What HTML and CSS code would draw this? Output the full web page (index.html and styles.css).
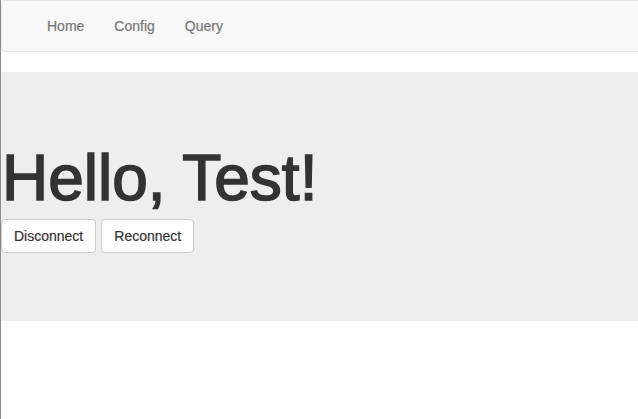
FILE: index.html
```html
<!DOCTYPE html>
<html lang="en">
<head>
<meta charset="utf-8">
<title>Hello, Test!</title>
<link rel="stylesheet" href="styles.css">
</head>
<body>
<div class="page">
  <nav class="navbar">
    <ul class="nav">
      <li><a href="#">Home</a></li>
      <li><a href="#">Config</a></li>
      <li><a href="#">Query</a></li>
    </ul>
  </nav>
  <section class="jumbotron">
    <h1 class="title">Hello, Test!</h1>
    <div class="actions">
      <button class="btn" type="button">Disconnect</button>
      <button class="btn" type="button">Reconnect</button>
    </div>
  </section>
</div>
</body>
</html>
```
FILE: styles.css
```css
html, body {
  margin: 0;
  padding: 0;
  background: #fff;
  overflow: hidden;
}
body {
  font-family: "Liberation Sans", Arial, Helvetica, sans-serif;
  font-size: 14px;
  line-height: 20px;
  color: #333;
}
.page {
  border-left: 1px solid #8c8c8c;
  min-height: 419px;
  box-sizing: border-box;
}
.navbar {
  height: 52px;
  box-sizing: border-box;
  background: #f8f8f8;
  border: 1px solid #e7e7e7;
  border-radius: 4px;
  margin-right: -8px;
  margin-bottom: 20px;
  padding-left: 30px;
}
.nav {
  list-style: none;
  margin: 0;
  padding: 0;
  display: flex;
}
.nav a {
  display: block;
  padding: 15px;
  line-height: 20px;
  color: #777;
  text-decoration: none;
  -webkit-text-stroke: 0.2px #777;
}
.jumbotron {
  background: #eee;
  height: 249px;
  box-sizing: border-box;
  padding-top: 71px;
}
.title {
  margin: 0 0 0 1px;
  font-size: 64px;
  line-height: 70px;
  font-weight: 500;
  color: #333;
  -webkit-text-stroke: 1.6px #333;
}
.actions {
  display: flex;
  gap: 5px;
  margin-top: 6px;
}
.btn {
  font-family: inherit;
  font-size: 14px;
  line-height: 20px;
  padding: 6px 12px;
  color: #333;
  background: #fff;
  border: 1px solid #ccc;
  border-radius: 4px;
  margin: 0;
  -webkit-text-stroke: 0.2px #333;
}
```
